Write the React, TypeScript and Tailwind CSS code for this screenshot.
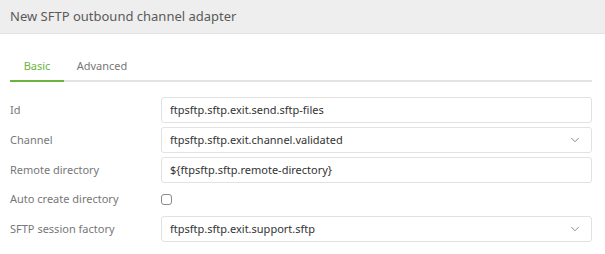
import { ChevronDown } from "lucide-react";

const rows = [
  { label: "Id", value: "ftpsftp.sftp.exit.send.sftp-files", kind: "input" },
  { label: "Channel", value: "ftpsftp.sftp.exit.channel.validated", kind: "select" },
  { label: "Remote directory", value: "${ftpsftp.sftp.remote-directory}", kind: "input" },
  { label: "Auto create directory", value: "", kind: "checkbox" },
  { label: "SFTP session factory", value: "ftpsftp.sftp.exit.support.sftp", kind: "select" },
];

const App = () => {
  return (
    <div
      className="w-[605px] h-[254px] bg-white overflow-hidden"
      style={{ fontFamily: '"Noto Sans", "Open Sans", sans-serif' }}
    >
      {/* Header */}
      <div className="h-[34px] bg-[#eeeeee] border-b border-[#e2e2e2] flex items-center px-[10px]">
        <h1 className="text-[13px] text-[#5a5a5a]">New SFTP outbound channel adapter</h1>
      </div>

      <div className="pl-[10px] pr-[13px]">
        {/* Tabs */}
        <div className="flex mt-[19px] border-b-2 border-[#e3e3e3] h-[29px]">
          <button className="w-[54px] text-[11px] text-[#6cb33e] border-b-2 border-[#6cb33e] -mb-[2px]">
            Basic
          </button>
          <button className="w-[76px] text-[11px] text-[#777777]">Advanced</button>
        </div>

        {/* Form */}
        <div className="mt-[15px] flex flex-col gap-[4px]">
          {rows.map((row) => (
            <div
              key={row.label}
              className={`flex items-center ${row.kind === "checkbox" ? "h-[25px]" : "h-[26px]"}`}
            >
              <label className="w-[151px] text-[11px] text-[#777777]">{row.label}</label>
              {row.kind === "checkbox" ? (
                <span className="w-[11px] h-[11px] border border-[#8a8a8a] rounded-[3px] bg-white" />
              ) : (
                <div className="flex-1 h-[26px] border border-[#e2e2e2] rounded-[3px] flex items-center pl-[8px] pr-[9px]">
                  <span className="flex-1 text-[11px] text-[#333333]">{row.value}</span>
                  {row.kind === "select" && (
                    <ChevronDown size={14} strokeWidth={1.25} className="text-[#666666]" />
                  )}
                </div>
              )}
            </div>
          ))}
        </div>
      </div>
    </div>
  );
};

export default App;
